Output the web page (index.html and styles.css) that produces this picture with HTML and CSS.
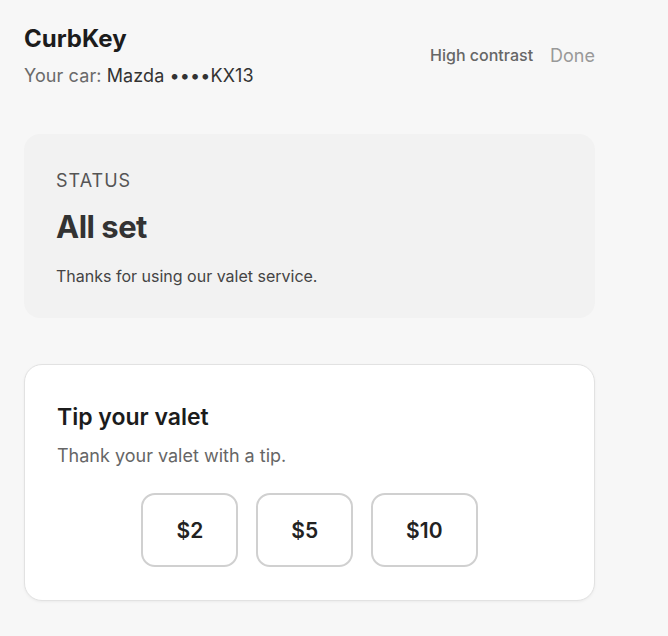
FILE: index.html
```html
<!DOCTYPE html>
<html lang="en">
<head>
  <meta charset="UTF-8" />
  <meta name="viewport" content="width=device-width, initial-scale=1" />
  <title>CurbKey</title>
  <link rel="stylesheet" href="styles.css">
</head>
<body>
  <div class="page">
    <header class="top-bar">
      <div class="brand">
        <h1>CurbKey</h1>
        <div class="car-line">Your car: <span class="car-name">Mazda ••••KX13</span></div>
      </div>
      <div class="top-actions">
        <button class="link-btn contrast">High contrast</button>
        <button class="link-btn done">Done</button>
      </div>
    </header>

    <section class="status-card">
      <div class="status-label">STATUS</div>
      <h2 class="status-title">All set</h2>
      <p class="status-note">Thanks for using our valet service.</p>
    </section>

    <section class="tip-card">
      <h3>Tip your valet</h3>
      <p class="tip-note">Thank your valet with a tip.</p>
      <div class="tip-options">
        <button class="tip-btn">$2</button>
        <button class="tip-btn">$5</button>
        <button class="tip-btn">$10</button>
      </div>
    </section>
  </div>
</body>
</html>
```

FILE: styles.css
```css
body {
  margin: 0;
  background: #f7f7f7;
  font-family: Inter, "Noto Sans", sans-serif;
  color: #222;
}
.page {
  max-width: 571px;
  padding: 24px;
}
.top-bar {
  display: flex;
  justify-content: space-between;
  align-items: center;
}
.brand h1 {
  margin: 0;
  font-size: 24px;
  font-weight: 700;
  color: #1c1c1c;
}
.car-line {
  margin-top: 12px;
  font-size: 18px;
  letter-spacing: 0.1px;
  color: #6a6a6a;
}
.car-name {
  color: #333;
}
.top-actions {
  display: flex;
  align-items: center;
  gap: 17px;
}
.link-btn {
  border: none;
  background: none;
  padding: 0;
  font-family: inherit;
  cursor: pointer;
}
.contrast {
  font-size: 16px;
  font-weight: 500;
  color: #666;
}
.done {
  font-size: 18px;
  color: #999;
}
.status-card {
  margin-top: 48px;
  background: #f2f2f2;
  border-radius: 16px;
  padding: 36px 32px 32px;
}
.status-label {
  font-size: 18px;
  letter-spacing: 1px;
  color: #555;
}
.status-title {
  margin: 17px 0 0;
  font-size: 31px;
  font-weight: 700;
  color: #333;
  letter-spacing: -0.5px;
}
.status-note {
  margin: 21px 0 0;
  font-size: 16px;
  color: #444;
}
.tip-card {
  margin-top: 46px;
  background: #fff;
  border: 1px solid #e2e2e2;
  border-radius: 18px;
  box-shadow: 0 1px 3px rgba(0,0,0,0.05);
  padding: 38px 32px 33px;
}
.tip-card h3 {
  margin: 0;
  font-size: 23px;
  font-weight: 600;
  color: #1c1c1c;
}
.tip-note {
  margin: 14px 0 0;
  font-size: 18px;
  color: #666;
}
.tip-options {
  display: flex;
  justify-content: center;
  gap: 18px;
  margin-top: 27px;
}
.tip-btn {
  height: 74px;
  min-width: 95px;
  padding: 0 33px;
  background: #fff;
  border: 2px solid #d0d0d0;
  border-radius: 14px;
  font-family: inherit;
  font-size: 21px;
  font-weight: 600;
  color: #222;
  cursor: pointer;
}
```
